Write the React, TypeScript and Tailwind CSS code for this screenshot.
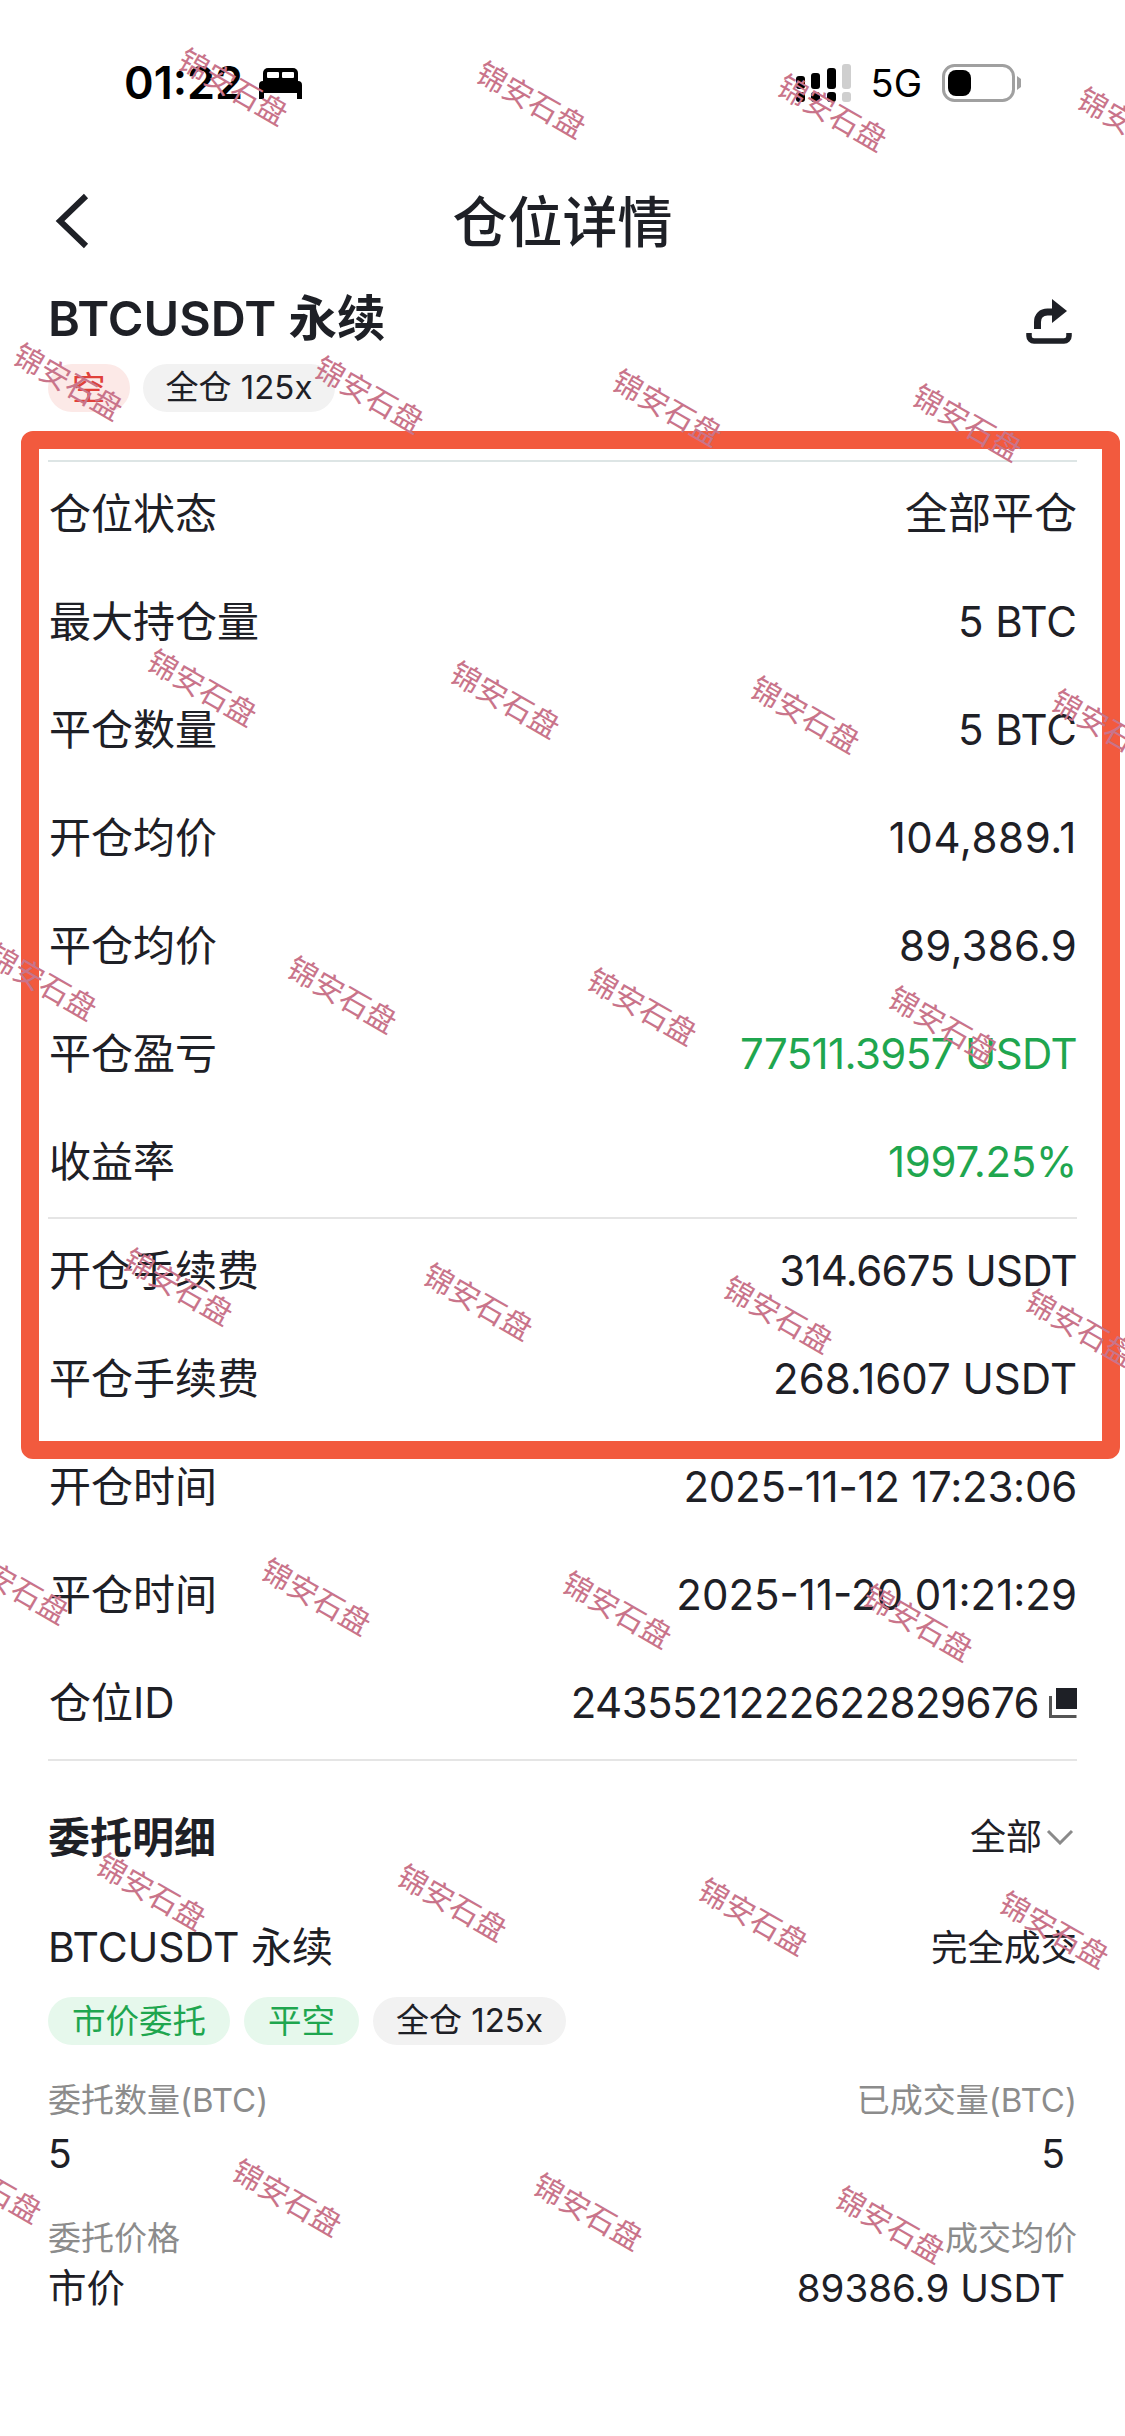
import React from 'react'

const watermarks = [
  [233, 87], [531, 100], [832, 113], [1132, 126],
  [68, 382], [369, 395], [667, 408], [967, 423],
  [202, 688], [505, 700], [805, 715], [1106, 728],
  [42, 982], [342, 995], [642, 1007], [943, 1025],
  [178, 1287], [478, 1302], [778, 1315], [1080, 1328],
  [14, 1586], [316, 1597], [617, 1610], [918, 1623],
  [151, 1892], [452, 1903], [753, 1917], [1054, 1930],
  [-13, 2185], [287, 2198], [588, 2212], [890, 2225],
]

const Row = ({ label, value, valueClass = '' }: { label: string; value: React.ReactNode; valueClass?: string }) => (
  <div className="flex justify-between items-center h-[108px] pb-[5px] text-[42px]">
    <span className="pl-[1px]">{label}</span>
    <span className={valueClass}>{value}</span>
  </div>
)

const Pill = ({ children, green, red }: { children: React.ReactNode; green?: boolean; red?: boolean }) => (
  <span
    className={`flex items-center justify-center h-[48px] rounded-[24px] ${
      green
        ? 'px-[24px] text-[33.5px] bg-[#e6f8ec] text-[#1fa64f]'
        : red
          ? 'px-[24px] text-[33.5px] bg-[#fce9e7] text-[#e0413a]'
          : 'px-[23px] text-[33px] bg-[#f2f2f2] text-[#1e2026]'
    }`}
  >
    {children}
  </span>
)

const StatusBar = () => (
  <div className="flex items-center h-[60px] mt-[53px] pl-[124px] pr-[104px]">
    <span className="text-[45px] font-semibold text-black">01:22</span>
    <svg className="ml-[16px]" width="43" height="31" viewBox="0 0 43 31">
      <path d="M9 0h25a5 5 0 0 1 5 5v10H4V5a5 5 0 0 1 5-5z" fill="#000" />
      <rect x="8" y="4" width="12" height="6" rx="1" fill="#fff" />
      <rect x="23" y="4" width="12" height="6" rx="1" fill="#fff" />
      <path d="M4 13h35a4 4 0 0 1 4 4v14h-5v-6H5v6H0V17a4 4 0 0 1 4-4z" fill="#000" />
    </svg>
    <div className="flex-1" />
    <svg width="56" height="39" viewBox="0 0 56 39">
      <rect x="1" y="12" width="9" height="13" rx="3" fill="#000" />
      <rect x="1" y="28" width="9" height="10" rx="3" fill="#000" />
      <rect x="16" y="9" width="9" height="16" rx="3" fill="#000" />
      <rect x="16" y="28" width="9" height="10" rx="3" fill="#000" />
      <rect x="32" y="4" width="9" height="21" rx="3" fill="#000" />
      <rect x="32" y="28" width="9" height="10" rx="3" fill="#000" />
      <rect x="47" y="0" width="9" height="25" rx="3" fill="#cfcfcf" />
      <rect x="47" y="28" width="9" height="10" rx="3" fill="#cfcfcf" />
    </svg>
    <span className="ml-[20px] text-[38px] text-black">5G</span>
    <svg className="ml-[20px]" width="79" height="38" viewBox="0 0 79 38">
      <rect x="1.5" y="1.5" width="70" height="35" rx="11" fill="#fff" stroke="#a0a0a0" strokeWidth="3" />
      <rect x="6" y="6" width="23" height="26" rx="8" fill="#000" />
      <path d="M75 12l4 3v8l-4 3z" fill="#a0a0a0" />
    </svg>
  </div>
)

const NavBar = () => (
  <div className="relative flex items-center justify-center h-[80px] mt-[69px]">
    <svg className="absolute left-[54px] top-[11px]" width="36" height="56" viewBox="0 0 36 56" fill="none">
      <path d="M32 3L6 28l26 25" stroke="#1e2026" strokeWidth="6" />
    </svg>
    <h1 className="text-[55px] font-medium text-[#1e2026]">仓位详情</h1>
  </div>
)

const ShareIcon = () => (
  <svg width="46" height="46" viewBox="0 0 46 46" fill="none">
    <path d="M11.500 30v-7c0-6 4-10 10-10h5" stroke="#1e2026" strokeWidth="7" />
    <path d="M26 0l15 12-15 12z" fill="#1e2026" />
    <path d="M3 34v3a5 5 0 0 0 5 5h30a5 5 0 0 0 5-5v-3" stroke="#1e2026" strokeWidth="5.5" />
  </svg>
)

const CopyIcon = () => (
  <svg width="28" height="30" viewBox="0 0 28 30">
    <rect x="7" y="0" width="21" height="21" fill="#1e2026" />
    <path d="M1.5 8v20.500h26" fill="none" stroke="#555" strokeWidth="3" />
  </svg>
)

export default function App() {
  return (
    <div className="relative h-[2436px] overflow-hidden bg-white text-[#1e2026] font-[Inter,'Noto_Sans_CJK_SC',sans-serif]">
      <StatusBar />
      <NavBar />

      <div className="px-[48px]">
        <div className="flex justify-between items-center mt-[22px] h-[70px]">
          <span className="text-[48.500px] font-semibold">BTCUSDT 永续</span>
          <span className="mr-[5px] mt-[6px]">
            <ShareIcon />
          </span>
        </div>
        <div className="flex gap-[13px] mt-[10px]">
          <Pill red>空</Pill>
          <Pill>全仓 125x</Pill>
        </div>

        <div className="mt-[48px] border-t-2 border-[#dde5e5]">
          <Row label="仓位状态" value="全部平仓" valueClass="text-[43px]" />
          <Row label="最大持仓量" value="5 BTC" />
          <Row label="平仓数量" value="5 BTC" />
          <Row label="开仓均价" value="104,889.1" valueClass="tracking-[0.6px]" />
          <Row label="平仓均价" value="89,386.9" valueClass="tracking-[0.2px]" />
          <Row label="平仓盈亏" value="77511.3957 USDT" valueClass="text-[#1fa64f] tracking-[-0.6px]" />
          <Row label="收益率" value="1997.25%" valueClass="text-[#1fa64f] tracking-[-0.3px]" />
        </div>
        <div className="border-t-2 border-[#e5e5e5] -mt-[1px]">
          <Row label="开仓手续费" value="314.6675 USDT" valueClass="tracking-[-0.7px]" />
          <Row label="平仓手续费" value="268.1607 USDT" />
          <Row label="开仓时间" value="2025-11-12 17:23:06" valueClass="tracking-[-0.25px]" />
          <Row label="平仓时间" value="2025-11-20 01:21:29" />
          <Row
            label="仓位ID"
            value={
              <span className="flex items-center gap-[10px]">
                <span className="tracking-[-0.55px]">2435521222622829676</span>
                <CopyIcon />
              </span>
            }
          />
        </div>

        <div className="border-t-2 border-[#e5e5e5] pt-[46px]">
          <div className="flex justify-between items-center h-[60px]">
            <span className="text-[42px] font-bold">委托明细</span>
            <span className="flex items-center gap-[4px] pr-[3px] text-[36px]">
              全部
              <svg width="28" height="16" viewBox="0 0 28 16" fill="none">
                <path d="M2 2l12 12L26 2" stroke="#8a8a8a" strokeWidth="3" />
              </svg>
            </span>
          </div>
          <div className="flex justify-between items-center mt-[51px] h-[60px]">
            <span className="text-[41px]">BTCUSDT 永续</span>
            <span className="text-[36.500px]">完全成交</span>
          </div>
          <div className="flex gap-[14px] mt-[19px]">
            <Pill green>市价委托</Pill>
            <Pill green>平空</Pill>
            <Pill>全仓 125x</Pill>
          </div>
          <div className="flex justify-between mt-[31px] text-[33px] text-[#8c8c8c]">
            <span>委托数量(BTC)</span>
            <span>已成交量(BTC)</span>
          </div>
          <div className="flex justify-between -mt-[1px] pr-[12px] text-[39px]">
            <span>5</span>
            <span>5</span>
          </div>
          <div className="flex justify-between mt-[31px] text-[33px] text-[#8c8c8c]">
            <span>委托价格</span>
            <span>成交均价</span>
          </div>
          <div className="flex justify-between -mt-[4px] pr-[12px] text-[38.500px]">
            <span>市价</span>
            <span>89386.9 USDT</span>
          </div>
        </div>
      </div>

      {/* red frame drawn over the screenshot */}
      <div className="absolute left-[21px] top-[431px] w-[1099px] h-[1028px] border-[18px] border-[#f25a3e] rounded-[12px] pointer-events-none" />

      {/* watermark layer */}
      {watermarks.map(([x, y], i) => (
        <span
          key={i}
          className="absolute text-center text-[30px] leading-[32px] text-[#c9748a] rotate-[30deg] -translate-x-1/2 -translate-y-1/2 whitespace-nowrap"
          style={{ left: x, top: y }}
        >
          锦安石盘
        </span>
      ))}
    </div>
  )
}
